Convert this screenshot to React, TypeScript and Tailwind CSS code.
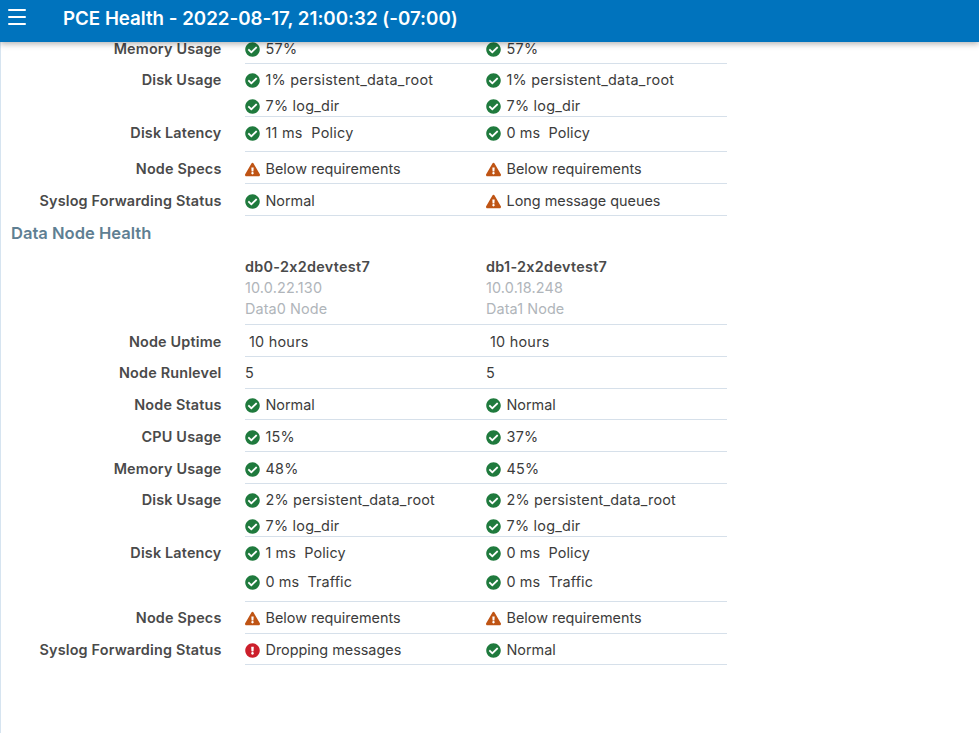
import { FaCheckCircle, FaExclamationCircle, FaExclamationTriangle } from "react-icons/fa";

type Kind = "ok" | "warn" | "err" | "none";
type Line = { k: Kind; t: string; indent?: boolean };
type Row = { label: string; h: string; pad: string; gap?: string; a: Line[]; b: Line[] };

const ok = (t: string): Line => ({ k: "ok", t });
const warn = (t: string): Line => ({ k: "warn", t });
const err = (t: string): Line => ({ k: "err", t });
const plain = (t: string, indent = false): Line => ({ k: "none", t, indent });

function Icon({ k }: { k: Kind }) {
  if (k === "ok") return <FaCheckCircle className="text-[15px] text-[#1f7a3d] shrink-0" />;
  if (k === "warn") return <FaExclamationTriangle className="text-[15px] text-[#bf5414] shrink-0" />;
  if (k === "err") return <FaExclamationCircle className="text-[15px] text-[#cc1f2b] shrink-0" />;
  return null;
}

function spacing(t: string) {
  if (t.startsWith("11 ms")) return "tracking-[0.25px]";
  if (t.includes(" ms")) return "tracking-[0.1px]";
  if (t.startsWith("2%")) return "tracking-[0.2px]";
  if (/\d/.test(t)) return "tracking-[0.25px]";
  return "";
}

function Cell({ lines, gap = "", extra = "" }: { lines: Line[]; gap?: string; extra?: string }) {
  return (
    <div className={`w-[241px] flex flex-col ${gap} ${extra}`}>
      {lines.map((l, i) => (
        <div key={i} className={`flex items-center gap-[5.5px] shrink-0 h-[26px] whitespace-pre ${l.indent ? "pl-1" : ""}`}>
          <Icon k={l.k} />
          <span className={spacing(l.t)}>{l.t}</span>
        </div>
      ))}
    </div>
  );
}

function HealthRow({ row }: { row: Row }) {
  return (
    <div className="flex">
      <div className={`w-[220.5px] shrink-0 text-right font-semibold tracking-[0.17px] text-[#4a4a4a] leading-[26px] ${row.pad}`}>
        {row.label}
      </div>
      <div className={`ml-[23.5px] flex border-b border-[#d6e0ea] ${row.h} ${row.pad}`}>
        <Cell lines={row.a} gap={row.gap} />
        <Cell lines={row.b} gap={row.gap} />
      </div>
    </div>
  );
}

const hi = { h: "h-[32px]", pad: "pt-[4px]" };
const lo = { h: "h-[32px]", pad: "pt-[3px]" };
const two = { h: "h-[53px]", pad: "pt-[3px]" };
const lat = { pad: "pt-[3px]", gap: "gap-[3px]" };

const top: Row[] = [
  { label: "Disk Usage", ...two, a: [ok("1% persistent_data_root"), ok("7% log_dir")], b: [ok("1% persistent_data_root"), ok("7% log_dir")] },
  { label: "Disk Latency", ...lat, h: "h-[35px]", a: [ok("11 ms  Policy")], b: [ok("0 ms  Policy")] },
  { label: "Node Specs", ...hi, a: [warn("Below requirements")], b: [warn("Below requirements")] },
  { label: "Syslog Forwarding Status", ...hi, a: [ok("Normal")], b: [warn("Long message queues")] },
];

const data: Row[] = [
  { label: "Node Uptime", ...hi, a: [plain("10 hours", true)], b: [plain("10 hours", true)] },
  { label: "Node Runlevel", ...lo, a: [plain("5")], b: [plain("5")] },
  { label: "Node Status", ...lo, h: "h-[31px]", a: [ok("Normal")], b: [ok("Normal")] },
  { label: "CPU Usage", ...hi, a: [ok("15%")], b: [ok("37%")] },
  { label: "Memory Usage", ...hi, a: [ok("48%")], b: [ok("45%")] },
  { label: "Disk Usage", ...two, a: [ok("2% persistent_data_root"), ok("7% log_dir")], b: [ok("2% persistent_data_root"), ok("7% log_dir")] },
  { label: "Disk Latency", ...lat, h: "h-[65px]", a: [ok("1 ms  Policy"), ok("0 ms  Traffic")], b: [ok("0 ms  Policy"), ok("0 ms  Traffic")] },
  { label: "Node Specs", ...lo, a: [warn("Below requirements")], b: [warn("Below requirements")] },
  { label: "Syslog Forwarding Status", ...lo, h: "h-[31px]", a: [err("Dropping messages")], b: [ok("Normal")] },
];

function NodeHead({ name, ip, role }: { name: string; ip: string; role: string }) {
  return (
    <div className="w-[241px] leading-[21px]">
      <div className="font-semibold tracking-[0.3px] text-[#4a4a4a]">{name}</div>
      <div className="text-[#b0b5ba] tracking-[0.15px]">{ip}</div>
      <div className="text-[#b0b5ba] tracking-[0.1px]">{role}</div>
    </div>
  );
}

export default function App() {
  return (
    <div className="h-[733px] w-[979px] overflow-hidden flex flex-col bg-white text-[14.4px] text-[#3c3c3c] font-['Inter',sans-serif] [font-feature-settings:'calt'_0]">
      <header className="relative z-10 h-[42px] shrink-0 bg-[#0073bd] flex items-center shadow-[0_2px_6px_rgba(0,0,0,0.3)]">
        <div className="ml-2 mb-[8px] w-[18px] flex flex-col gap-[4.5px]">
          <span className="h-[2.5px] bg-white rounded-full" />
          <span className="h-[2.5px] bg-white rounded-full" />
          <span className="h-[2.5px] bg-white rounded-full" />
        </div>
        <h1 className="ml-[37px] mb-[4px] text-[18.72px] font-semibold text-white whitespace-nowrap">PCE Health - 2022-08-17, 21:00:32 (-07:00)</h1>
      </header>
      <main className="flex-1 border-l border-[#d6e4f0]">
        <div className="flex">
          <div className="w-[220.5px] shrink-0 text-right font-semibold tracking-[0.17px] text-[#4a4a4a] leading-[14px]">Memory Usage</div>
          <div className="ml-[23.5px] flex h-[22px] border-b border-[#d6e0ea]">
            <Cell lines={[ok("57%")]} extra="-mt-[6px]" />
            <Cell lines={[ok("57%")]} extra="-mt-[6px]" />
          </div>
        </div>
        {top.map((r) => <HealthRow key={r.label} row={r} />)}
        <h2 className="ml-[10px] mt-[6px] text-[16.56px] leading-[22px] font-semibold text-[#5f7f93]">Data Node Health</h2>
        <div className="flex pl-[244px] mt-[12px]">
          <div className="flex w-[482px] h-[69px] border-b border-[#d6e0ea]">
            <NodeHead name="db0-2x2devtest7" ip="10.0.22.130" role="Data0 Node" />
            <NodeHead name="db1-2x2devtest7" ip="10.0.18.248" role="Data1 Node" />
          </div>
        </div>
        {data.map((r) => <HealthRow key={r.label} row={r} />)}
      </main>
    </div>
  );
}
